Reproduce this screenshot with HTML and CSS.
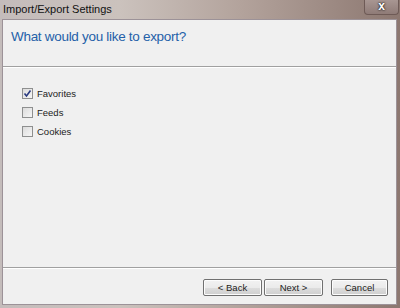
FILE: index.html
```html
<!DOCTYPE html>
<html lang="en">
<head>
  <meta charset="UTF-8">
  <title>Import/Export Settings</title>
  <link rel="stylesheet" href="styles.css">
</head>
<body>

  <div class="window">
    <div class="titlebar">
      <span class="title">Import/Export Settings</span>
      <div class="close">x</div>
    </div>

    <div class="panel">
      <div class="header">
        <h2>What would you like to export?</h2>
      </div>

      <div class="content">
        <label class="option"><span class="box checked">
          <svg width="9" height="9" viewBox="0 0 9 9"><path d="M1.5 4.5 L3.5 7 L7.5 1.5" fill="none" stroke="#2a3a80" stroke-width="1.6"/></svg>
        </span>Favorites</label>
        <label class="option"><span class="box"></span>Feeds</label>
        <label class="option"><span class="box"></span>Cookies</label>
      </div>

      <div class="footer">
        <button class="btn">&lt; Back</button>
        <button class="btn">Next &gt;</button>
        <button class="btn cancel">Cancel</button>
      </div>
    </div>
  </div>

</body>
</html>
```

FILE: styles.css
```css
body {
  margin: 0;
  font-family: "Liberation Sans", Arial, sans-serif;
}
.window {
  width: 400px;
  height: 308px;
  display: flex;
  flex-direction: column;
  background: linear-gradient(90deg, #c4bcbb 0%, #cbc2bd 30%, #b3a39c 60%, #8c7770 100%);
  box-sizing: border-box;
  padding: 0 3px 3px 2px;
}
.titlebar {
  height: 19px;
  display: flex;
  align-items: flex-start;
  justify-content: space-between;
  flex-shrink: 0;
}
.title {
  font-size: 11px;
  color: #111;
  padding: 3px 0 0 1px;
}
.close {
  width: 35px;
  height: 15px;
  margin-right: -2px;
  border: 1px solid #6e5a56;
  border-top: none;
  border-radius: 0 0 4px 4px;
  background: linear-gradient(#a89692, #8f7b77);
  color: #fff;
  font-weight: bold;
  font-size: 12px;
  line-height: 12px;
  text-align: center;
  text-shadow: 0 0 2px #222, 0 0 2px #222;
  box-sizing: border-box;
}
.panel {
  flex: 1;
  display: flex;
  flex-direction: column;
  background-color: #f0f0f0;
  border: 1px solid #9c9298;
}
.header {
  height: 47px;
  border-bottom: 1px solid #a0a0a0;
  box-shadow: 0 1px 0 #fff;
  box-sizing: border-box;
  padding: 9px 0 0 8px;
}
h2 {
  margin: 0;
  font-size: 13.5px;
  letter-spacing: -0.3px;
  font-weight: normal;
  color: #2460a8;
}
.content {
  flex: 1;
  display: flex;
  flex-direction: column;
  gap: 7px;
  padding: 20px 0 0 19px;
  border-bottom: 1px solid #a0a0a0;
  box-shadow: 0 1px 0 #fff;
}
.option {
  display: flex;
  align-items: center;
  gap: 4px;
  font-size: 9.5px;
  color: #222;
  height: 12px;
}
.box {
  width: 11px;
  height: 11px;
  box-sizing: border-box;
  border: 1px solid #8e8f8f;
  background: linear-gradient(135deg, #dcdcdc, #f6f6f6);
  display: flex;
  align-items: center;
  justify-content: center;
}
.footer {
  height: 36px;
  display: flex;
  align-items: flex-start;
  justify-content: flex-end;
  padding: 11px 8px 0 0;
  box-sizing: border-box;
}
.btn {
  width: 59px;
  height: 17px;
  margin-left: 2px;
  padding: 0;
  font-family: "Liberation Sans", Arial, sans-serif;
  font-size: 9.5px;
  color: #222;
  border: 1px solid #707070;
  border-radius: 2px;
  background: linear-gradient(#f2f2f2 0%, #ebebeb 50%, #dddddd 51%, #cfcfcf 100%);
  box-shadow: inset 0 0 0 1px #fcfcfc;
}
.btn.cancel {
  margin-left: 8px;
  width: 57px;
}
```
